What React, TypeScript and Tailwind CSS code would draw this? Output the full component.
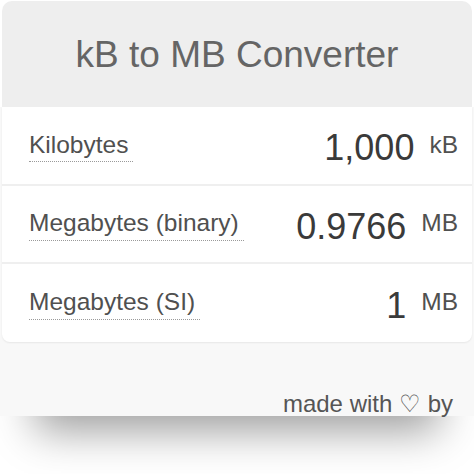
const rows = [
  { label: "Kilobytes", value: "1,000", unit: "kB", h: "h-[79px]" },
  { label: "Megabytes (binary)", value: "0.9766", unit: "MB", h: "h-[78px]" },
  { label: "Megabytes (SI)", value: "1", unit: "MB", h: "h-[78px]" },
];

export default function App() {
  return (
    <div className="h-[474px] w-[474px] overflow-hidden bg-white font-['Liberation_Sans',Arial,sans-serif]">
      <div className="mx-[2px] mt-[1px] flex h-[106px] items-center justify-center rounded-t-[10px] bg-[#eeeeee]">
        <h1 className="text-[37px] leading-none text-[#656565]">kB to MB Converter</h1>
      </div>

      <div className="relative z-10 bg-[#f8f8f8] shadow-[0_50px_40px_-35px_rgba(0,0,0,0.38)]">
        <div className="mx-[2px] rounded-b-[8px] bg-white shadow-[0_1px_2px_rgba(0,0,0,0.07)]">
          {rows.map((row, i) => (
            <div
              key={row.label}
              className={`flex items-center pl-[27px] pr-[14px] ${row.h} ${
                i < rows.length - 1 ? "border-b-2 border-[#efefef]" : ""
              }`}
            >
              <span className="mt-[4px] border-b border-dotted border-[#9a9a9a] pb-[4px] pr-[5px] text-[24.5px] leading-none text-[#505050]">
                {row.label}
              </span>
              <span className="ml-auto mt-[5px] text-[36px] leading-none text-[#3a3a3a]">{row.value}</span>
              <span className="mb-[1px] ml-[15px] text-[24.5px] leading-none text-[#505050]">
                {row.unit}
              </span>
            </div>
          ))}
        </div>

        {/* footer */}
        <div className="flex h-[74px] items-end justify-end pr-[21px]">
          <span className="text-[24px] leading-none text-[#555]">made with ♡ by</span>
        </div>
      </div>
    </div>
  );
}
